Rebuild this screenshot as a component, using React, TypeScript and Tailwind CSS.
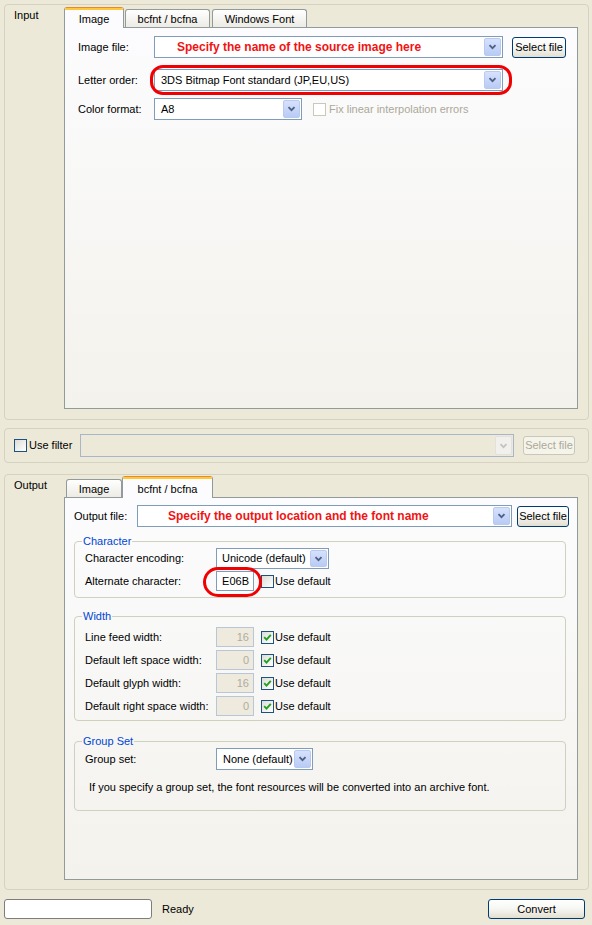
import React from "react";

type Kids = { children?: React.ReactNode; className?: string; disabled?: boolean };

function Chevron({ disabled }: { disabled?: boolean }) {
  return (
    <svg width="9" height="6" viewBox="0 0 9 6">
      <path d="M1.5 1.2 L4.5 4.2 L7.5 1.2" fill="none" stroke={disabled ? "#c3c3c3" : "#4d6185"} strokeWidth="1.8" />
    </svg>
  );
}

function Combo({ children, className = "", disabled }: Kids) {
  return (
    <div
      className={`flex items-center border ${
        disabled ? "border-[#a9b6c9] bg-[#ece9d8]" : "border-[#7f9db9] bg-white"
      } ${className}`}
    >
      <div className="flex-1 overflow-hidden whitespace-nowrap">{children}</div>
      <div
        className={`mr-px my-px self-stretch w-[17px] shrink-0 rounded-[2px] border flex items-center justify-center ${
          disabled
            ? "border-[#e2e1dc] bg-[#f1f0ec]"
            : "border-[#b9c9f0] bg-linear-to-b from-[#d6e1fc] to-[#b9cbf5]"
        }`}
      >
        <Chevron disabled={disabled} />
      </div>
    </div>
  );
}

function XPButton({ children, className = "", disabled }: Kids) {
  return (
    <div
      className={`flex items-center justify-center rounded-[3px] border whitespace-nowrap shrink-0 ${
        disabled
          ? "border-[#c9c7ba] bg-[#f5f4ea] text-[#aca899]"
          : "border-[#003c74] bg-linear-to-b from-white via-[#f6f6f2] to-[#e2ded1]"
      } ${className}`}
    >
      {children}
    </div>
  );
}

function Checkbox({ checked, disabled }: { checked?: boolean; disabled?: boolean }) {
  return (
    <div
      className={`w-[13px] h-[13px] shrink-0 border flex items-center justify-center ${
        disabled ? "border-[#cac8bb] bg-white" : "border-[#1c5180] bg-linear-to-br from-[#dcdcd7] to-white"
      }`}
    >
      {checked && (
        <svg width="9" height="9" viewBox="0 0 9 9">
          <path d="M1.2 4.2 L3.5 6.6 L7.8 1.8" fill="none" stroke="#21a121" strokeWidth="1.9" />
        </svg>
      )}
    </div>
  );
}

function TextBox({ children, className = "", disabled }: Kids) {
  return (
    <div
      className={`flex items-center justify-end pr-[4px] border shrink-0 ${
        disabled ? "border-[#b9c6d8] bg-[#eeeadd] text-[#b0ac9d]" : "border-[#7f9db9] bg-white"
      } ${className}`}
    >
      {children}
    </div>
  );
}

function Tab({ label, active, className = "" }: { label: string; active?: boolean; className?: string }) {
  if (active) {
    return (
      <div
        className={`relative z-10 -mb-px flex flex-col overflow-hidden rounded-t-[3px] border-x border-[#919b9c] bg-[#fcfcfe] ${className}`}
      >
        <div className="h-[3px] border-t border-[#e68b2c] bg-[#ffc83c]" />
        <div className="flex-1 flex items-center justify-center pt-[1px]">{label}</div>
      </div>
    );
  }
  return (
    <div
      className={`flex items-center justify-center pt-[2px] rounded-t-[3px] border border-b-0 border-[#919b9c] bg-linear-to-b from-white to-[#ecebe4] ${className}`}
    >
      {label}
    </div>
  );
}

function Group({ legend, children, className = "" }: { legend: string; children: React.ReactNode; className?: string }) {
  return (
    <fieldset className={`w-[492px] rounded-[4px] border border-[#d0d0bf] ${className}`}>
      <legend className="ml-[7px] px-[1px] text-[#0046d5] leading-[13px]">{legend}</legend>
      {children}
    </fieldset>
  );
}

const Red = ({ children, className = "" }: Kids) => (
  <span className={`font-bold text-[12px] text-[#f01414] ${className}`}>{children}</span>
);

export default function App() {
  return (
    <div className="w-[592px] h-[925px] overflow-hidden bg-[#ece9d8] pl-[4px] pr-[3px] pt-[4px] font-['Liberation_Sans',Arial,sans-serif] text-[11px] leading-[13px] text-black flex flex-col">
      {/* Input */}
      <div className="h-[416px] shrink-0 rounded-[4px] border border-[#d6d2c1] flex">
        <div className="w-[59px] shrink-0 pl-[9px] pt-[4px]">Input</div>
        <div className="flex-1 flex flex-col pt-[2px] pr-[10px] pb-[10px]">
          <div className="flex items-end h-[20px]">
            <Tab active label="Image" className="w-[60px] h-[21px]" />
            <Tab label="bcfnt / bcfna" className="ml-[1px] w-[85px] h-[18px]" />
            <Tab label="Windows Font" className="ml-[2px] w-[95px] h-[18px]" />
          </div>
          <div className="flex-1 border border-[#919b9c] bg-linear-to-b from-[#fcfcfe] to-[#f3f2ec] pt-[8px] pl-[13px]">
            <div className="flex items-center h-[22px]">
              <div className="w-[76px] shrink-0">Image file:</div>
              <Combo className="w-[349px] h-[22px]">
                <Red className="pl-[22px]">Specify the name of the source image here</Red>
              </Combo>
              <XPButton className="ml-[9px] w-[54px] h-[21px]">Select file</XPButton>
            </div>
            <div className="flex items-center h-[22px] mt-[11px]">
              <div className="w-[76px] shrink-0">Letter order:</div>
              <div className="relative">
                <Combo className="w-[349px] h-[22px]">
                  <span className="pl-[6px]">3DS Bitmap Font standard (JP,EU,US)</span>
                </Combo>
                <div className="absolute -left-[4px] -right-[9px] -top-[4px] -bottom-[4px] rounded-[13px] border-[3px] border-[#f00000]" />
              </div>
            </div>
            <div className="flex items-center h-[22px] mt-[7px]">
              <div className="w-[76px] shrink-0">Color format:</div>
              <Combo className="w-[148px] h-[22px]">
                <span className="pl-[6px]">A8</span>
              </Combo>
              <div className="ml-[11px]">
                <Checkbox disabled />
              </div>
              <span className="ml-[3px] text-[#aca899]">Fix linear interpolation errors</span>
            </div>
          </div>
        </div>
      </div>

      {/* Use filter */}
      <div className="mt-[8px] h-[35px] shrink-0 rounded-[4px] border border-[#d6d2c1] flex items-center pl-[9px]">
        <div className="w-[66px] shrink-0 flex items-center">
          <Checkbox />
          <span className="ml-[2px]">Use filter</span>
        </div>
        <Combo disabled className="w-[434px] h-[23px]" />
        <XPButton disabled className="ml-[9px] w-[52px] h-[19px]">
          Select file
        </XPButton>
      </div>

      {/* Output */}
      <div className="mt-[11px] h-[416px] shrink-0 rounded-[4px] border border-[#d6d2c1] flex">
        <div className="w-[59px] shrink-0 pl-[9px] pt-[4px]">Output</div>
        <div className="flex-1 flex flex-col pt-[1px] pr-[10px] pb-[9px]">
          <div className="flex items-end h-[21px]">
            <Tab label="Image" className="ml-[2px] w-[56px] h-[18px]" />
            <Tab active label="bcfnt / bcfna" className="w-[91px] h-[22px]" />
          </div>
          <div className="flex-1 border border-[#919b9c] bg-linear-to-b from-[#fcfcfe] to-[#f3f2ec] pt-[7px] pl-[9px]">
            <div className="flex items-center h-[22px]">
              <div className="w-[63px] shrink-0">Output file:</div>
              <Combo className="w-[375px] h-[22px]">
                <Red className="pl-[30px]">Specify the output location and the font name</Red>
              </Combo>
              <XPButton className="ml-[5px] w-[52px] h-[21px]">Select file</XPButton>
            </div>

            <Group legend="Character" className="mt-[8px]">
              <div className="pl-[10px] pb-[6px]">
                <div className="flex items-center h-[21px]">
                  <div className="w-[131px] shrink-0">Character encoding:</div>
                  <Combo className="w-[113px] h-[21px]">
                    <span className="pl-[5px]">Unicode (default)</span>
                  </Combo>
                </div>
                <div className="flex items-center h-[20px] mt-[2px]">
                  <div className="w-[131px] shrink-0">Alternate character:</div>
                  <div className="relative">
                    <TextBox className="w-[38px] h-[20px]">E06B</TextBox>
                    <div className="absolute -left-[13px] -right-[8px] -top-[4px] -bottom-[6px] rounded-full border-[3px] border-[#f00000]" />
                  </div>
                  <div className="ml-[7px]">
                    <Checkbox />
                  </div>
                  <span className="ml-[1px]">Use default</span>
                </div>
              </div>
            </Group>

            <Group legend="Width" className="mt-[12px]">
              <div className="pl-[10px] pt-[4px] pb-[4px] flex flex-col gap-[3px]">
                {[
                  ["Line feed width:", "16"],
                  ["Default left space width:", "0"],
                  ["Default glyph width:", "16"],
                  ["Default right space width:", "0"],
                ].map(([l, v]) => (
                  <div key={l} className="flex items-center h-[20px]">
                    <div className="w-[131px] shrink-0">{l}</div>
                    <TextBox disabled className="w-[38px] h-[20px]">
                      {v}
                    </TextBox>
                    <div className="ml-[7px]">
                      <Checkbox checked />
                    </div>
                    <span className="ml-[1px]">Use default</span>
                  </div>
                ))}
              </div>
            </Group>

            <Group legend="Group Set" className="mt-[14px]">
              <div className="pl-[10px] pb-[16px]">
                <div className="flex items-center h-[22px]">
                  <div className="w-[131px] shrink-0">Group set:</div>
                  <Combo className="w-[97px] h-[22px]">
                    <span className="pl-[6px]">None (default)</span>
                  </Combo>
                </div>
                <div className="mt-[11px] pl-[4px] h-[13px] whitespace-nowrap">
                  If you specify a group set, the font resources will be converted into an archive font.
                </div>
              </div>
            </Group>
          </div>
        </div>
      </div>

      {/* Status bar */}
      <div className="mt-[9px] h-[20px] shrink-0 flex items-center">
        <div className="w-[148px] h-[20px] rounded-[3px] border border-[#7d7d7d] bg-white" />
        <span className="ml-[10px]">Ready</span>
        <XPButton className="ml-auto mr-[4px] w-[97px] h-[20px]">Convert</XPButton>
      </div>
    </div>
  );
}
